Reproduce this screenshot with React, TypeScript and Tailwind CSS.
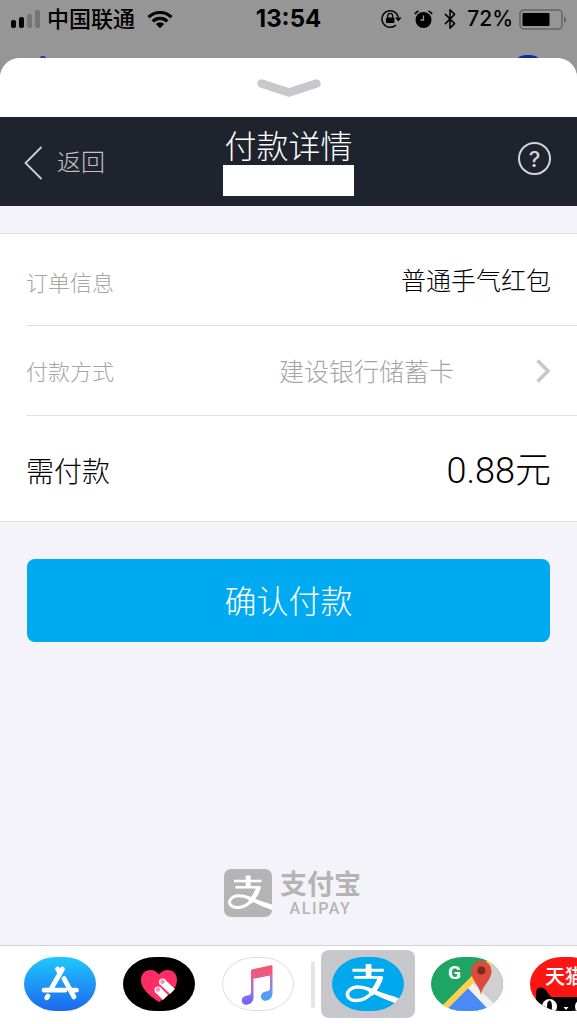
/**
 * Alipay payment sheet
 * Payment details shown over the conversation, with the app strip below
 */

import { useState } from "react";
import type { ReactNode } from "react";
import { Bluetooth } from "lucide-react";

const SignalIcon = () => (
  <svg width="31" height="18" viewBox="0 0 31 18" aria-hidden="true">
    <rect x="1" y="10" width="5" height="8" rx="2" />
    <rect x="9" y="7" width="5" height="11" rx="2" />
    <rect x="17" y="4" width="5" height="14" rx="2" fill="#747474" />
    <rect x="25" y="0" width="5" height="18" rx="2" fill="#747474" />
  </svg>
);

const WifiIcon = () => (
  <svg width="26" height="19" viewBox="0 0 26 19" aria-hidden="true">
    <g fill="none" stroke="#000" strokeWidth="3.2">
      <path d="M1.5 7.2a16.4 16.4 0 0 1 23 0" />
      <path d="M5.7 11.4a10.4 10.4 0 0 1 14.6 0" />
    </g>
    <path d="M13 18.2l-4.2-4.2a6 6 0 0 1 8.4 0z" />
  </svg>
);

const RotationLockIcon = () => (
  <svg width="21" height="20" viewBox="0 0 21 20" aria-hidden="true">
    <path
      d="M17.3 8A8.3 8.3 0 1 0 15 16"
      fill="none"
      stroke="#000"
      strokeWidth="1.4"
    />
    <path d="M14 8.500h6.600l-3.300 4z" />
    <rect x="5" y="8.500" width="8.400" height="5.600" rx="1" />
    <path
      d="M6.800 9V6.800a2.400 2.400 0 0 1 4.800 0V9"
      fill="none"
      stroke="#000"
      strokeWidth="1.3"
    />
  </svg>
);

const AlarmIcon = () => (
  <svg width="19" height="19" viewBox="0 0 19 19" aria-hidden="true">
    <circle cx="9.5" cy="10" r="8" fill="#000" />
    <path
      d="M1 4.200A6 6 0 0 1 4.500 1M18 4.200A6 6 0 0 0 14.500 1"
      fill="none"
      stroke="#000"
      strokeWidth="1.8"
    />
    <path d="M9.500 5.500v4.500H6.500" fill="none" stroke="#969696" strokeWidth="1.300" />
  </svg>
);

const BatteryIcon = () => (
  <svg width="48" height="21" viewBox="0 0 48 21" aria-hidden="true">
    <rect
      x="1"
      y="1"
      width="42"
      height="19"
      rx="4"
      fill="none"
      stroke="#666"
      strokeWidth="1.6"
    />
    <rect x="3.500" y="4" width="27" height="13" rx="1" />
    <path d="M45 7.500a3.600 3.600 0 0 1 0 6.600z" fill="#666" />
  </svg>
);

// Brand mark, drawn on a 48 unit square
const AlipayMark = () => (
  <g fill="none" stroke="#fff">
    <path d="M10 12h27.500M11.500 18.300h25" strokeWidth="2.600" />
    <path d="M24.200 6.500v12" strokeWidth="5" />
    <path
      d="M35 18C32 27 25 38.300 14 38.600C6.500 38.800 4 34 6.500 30.500C10 25.500 18 26 25 29L34 33"
      strokeWidth="3"
    />
    <path d="M34.800 18C33 23.500 30 29 26 33" strokeWidth="4.600" />
    <path
      d="M22 26.600C30 29.500 38 32.800 48 35.600V41C39 38 31 34 23 30Z"
      fill="#fff"
      stroke="none"
    />
  </g>
);

const AppStoreIcon = () => (
  <svg width="72" height="54" viewBox="0 0 72 54" aria-hidden="true">
    <defs>
      <linearGradient id="store" x1="0" y1="0" x2="0" y2="1">
        <stop offset="0" stopColor="#1fc8fb" />
        <stop offset="1" stopColor="#1d67f0" />
      </linearGradient>
    </defs>
    <rect width="72" height="54" fill="url(#store)" />
    <g stroke="#fff" strokeWidth="4.800" strokeLinecap="round">
      <path d="M38.500 12L27 32M33.500 12l2.500 4M40 21.500l10 18.500" />
      <path d="M20 33.200h21M48 33.200h4.500M24 39l-1.300 1.800" />
    </g>
  </svg>
);

const HeartIcon = () => (
  <svg width="72" height="54" viewBox="0 0 72 54" aria-hidden="true">
    <rect width="72" height="54" />
    <path
      d="M36 45C28 40 18 32.500 18 23c0-6 4-10 9-10 4 0 7 2 9 4.500C38 15 41 13 45 13c5 0 9 4 9 10 0 9.500-10 17-18 22z"
      fill="#ff2d66"
    />
    <g stroke="#fff" strokeWidth="7">
      <path d="M35 33l7.500 7.500M39.500 25l10 9.500" />
      <path d="M35 33h.1M39.500 25h.1" strokeLinecap="round" />
    </g>
    <g fill="#ff8fae">
      <circle cx="35" cy="32.500" r="2.200" />
      <circle cx="39.500" cy="24.800" r="2.200" />
    </g>
  </svg>
);

const MusicIcon = () => (
  <svg width="72" height="54" viewBox="0 0 72 54" aria-hidden="true">
    <defs>
      <linearGradient
        id="note"
        gradientUnits="userSpaceOnUse"
        x1="36"
        y1="8"
        x2="36"
        y2="46"
      >
        <stop offset="0" stopColor="#fb5468" />
        <stop offset="0.350" stopColor="#e0609a" />
        <stop offset="0.700" stopColor="#8a78ea" />
        <stop offset="1" stopColor="#7a5cff" />
      </linearGradient>
      <linearGradient
        id="note-right"
        gradientUnits="userSpaceOnUse"
        x1="36"
        y1="18"
        x2="36"
        y2="42"
      >
        <stop offset="0" stopColor="#d868a0" />
        <stop offset="0.500" stopColor="#7c8cf0" />
        <stop offset="1" stopColor="#3fa5ff" />
      </linearGradient>
    </defs>
    <path
      d="M28 13c0-1 .500-1.600 1.500-1.800L48 7.300c1-.200 1.500.200 1.500 1.200V17L30.500 20.800V39c0 4-2 6.600-5.500 7.600-3.500.800-6.300-1-6.300-4 0-2.800 2-4.600 5-5.200 2.500-.500 4.300-.800 4.300-3z"
      fill="url(#note)"
    />
    <path
      d="M47 16.500h2.500V35c0 4-2 6.600-5.500 7.500-3.500.800-6-1-6-4 0-2.800 2-4.500 4.700-5 2.500-.500 4.300-.800 4.300-3z"
      fill="url(#note-right)"
    />
  </svg>
);

const AlipayIcon = () => (
  <svg width="72" height="54" viewBox="0 0 72 54" aria-hidden="true">
    <rect width="72" height="54" fill="#00a9ee" />
    <g transform="translate(9 -0.500) scale(1.140)">
      <AlipayMark />
      <path d="M46 35L60 40V47L46 40.300z" fill="#fff" />
    </g>
  </svg>
);

const MapsIcon = () => (
  <svg width="72" height="54" viewBox="0 0 72 54" aria-hidden="true">
    <rect width="72" height="54" fill="#1fa563" />
    <path d="M12 54L62 4h10v50z" fill="#d0d0d0" />
    <path d="M14 54l23-23 22 23z" fill="#4a89f6" />
    <path d="M37 31l5-5 28 28H59z" fill="#f2f2f2" />
    <path d="M10 54L62 2" stroke="#fdd14c" strokeWidth="6" />
    <path
      d="M50 38c-1-9-10-15-10-24a10.300 10.300 0 0 1 20.600 0c0 9-9.600 15-10.600 24z"
      fill="#dd4b3e"
    />
    <circle cx="50.300" cy="13.500" r="4" fill="#7a2a23" />
    <text
      x="17"
      y="22"
      fontFamily="Roboto, sans-serif"
      fontSize="19"
      fontWeight="700"
      fill="#fff"
    >
      G
    </text>
  </svg>
);

const TmallIcon = () => (
  <svg width="72" height="54" viewBox="0 0 72 54" aria-hidden="true">
    <rect width="72" height="54" fill="#ff1414" />
    <path d="M6 54V35c1-6 8-6 12 1l3 4h30l3-4c4-7 11-7 12-1v19z" />
    <g fill="#fff">
      <circle cx="19.500" cy="49.500" r="7.500" />
      <circle cx="52.500" cy="49.500" r="7.500" />
      <path d="M33.500 50h5l-2.500 3z" />
    </g>
    <ellipse cx="19.500" cy="49.500" rx="2.500" ry="6" />
    <ellipse cx="52.500" cy="49.500" rx="2.500" ry="6" />
    <text
      x="15"
      y="27"
      fontFamily="'Noto Sans CJK SC', sans-serif"
      fontSize="20"
      fontWeight="500"
      fill="#fff"
    >
      天猫
    </text>
  </svg>
);

interface DockApp {
  id: string;
  name: string;
  icon: ReactNode;
}

const systemApps: DockApp[] = [
  { id: "store", name: "App Store", icon: <AppStoreIcon /> },
  { id: "touch", name: "Digital Touch", icon: <HeartIcon /> },
  { id: "music", name: "Music", icon: <MusicIcon /> },
];

const userApps: DockApp[] = [
  { id: "alipay", name: "Alipay", icon: <AlipayIcon /> },
  { id: "maps", name: "Google Maps", icon: <MapsIcon /> },
  { id: "tmall", name: "Tmall", icon: <TmallIcon /> },
];

interface DockButtonProps {
  app: DockApp;
  selected: boolean;
  onSelect: (id: string) => void;
}

function DockButton({ app, selected, onSelect }: DockButtonProps) {
  return (
    <button
      type="button"
      aria-label={app.name}
      aria-pressed={selected}
      onClick={() => onSelect(app.id)}
      className={`-mx-[11px] shrink-0 rounded-lg px-[11px] py-[7px] ${
        selected ? "bg-[#c8c7cc]" : ""
      }`}
    >
      <span
        className={`block h-[54px] w-[72px] overflow-hidden rounded-[32px/27px] ${
          app.id === "music" ? "border border-[#dedee0]" : ""
        }`}
      >
        {app.icon}
      </span>
    </button>
  );
}

export default function App() {
  const [activeApp, setActiveApp] = useState("alipay");

  return (
    <div className="flex min-h-screen flex-col overflow-hidden bg-[#969696] font-['Roboto','Noto_Sans_CJK_SC',sans-serif] text-black">
      {/* Status bar */}
      <header className="relative flex h-[58px] items-start px-2.5 pt-px font-['Inter','Noto_Sans_CJK_SC',sans-serif] text-[22px] leading-9 font-medium">
        <div className="flex h-9 flex-1 items-center">
          <SignalIcon />
          <span className="ml-1.5 mr-3">中国联通</span>
          <WifiIcon />
        </div>
        <span className="text-2xl leading-9 font-bold">13:54</span>
        <div className="flex h-9 flex-1 items-center justify-end gap-1.5">
          <RotationLockIcon />
          <span className="ml-1.5">
            <AlarmIcon />
          </span>
          <Bluetooth size={22} strokeWidth={1.7} />
          <span className="text-[21px]">72%</span>
          <BatteryIcon />
        </div>
        <span className="absolute bottom-0 left-10 h-0.5 w-1.5 rounded-t-full bg-[#24409a]" />
        <span className="absolute right-[39px] bottom-0 h-[3px] w-5 rounded-[50%_50%_0_0/100%_100%_0_0] bg-[#0a2aa0]" />
      </header>

      <main className="flex flex-1 flex-col overflow-hidden rounded-t-[20px] bg-[#f4f3f9]">
        {/* Drag handle */}
        <button
          type="button"
          aria-label="收起"
          className="flex h-[59px] items-center justify-center bg-white"
        >
          <svg width="66" height="20" viewBox="0 0 66 20" fill="none">
            <path
              d="M5.500 5.500L33 14.500L60.500 5.500"
              stroke="#c8c7cc"
              strokeWidth="8.500"
              strokeLinecap="round"
              strokeLinejoin="round"
            />
          </svg>
        </button>

        {/* Title bar */}
        <div className="flex h-[89px] items-center bg-[#1f232e] px-6">
          <div className="flex-1">
            <button
              type="button"
              className="flex items-center gap-3.5 pt-0.5 text-2xl font-light text-[#c4c4c4]"
            >
              <svg width="19" height="34" viewBox="0 0 19 34" fill="none">
                <path d="M17.500 1L1.500 17L17.500 33" stroke="#d0d0d0" strokeWidth="1.800" />
              </svg>
              返回
            </button>
          </div>
          <div className="flex flex-col items-center">
            <h1 className="pt-0.5 text-[32px] leading-9 font-light text-white">
              付款详情
            </h1>
            <div className="h-[31px] w-[131px] bg-white" />
          </div>
          <div className="flex flex-1 justify-end">
            <button
              type="button"
              aria-label="帮助"
              className="mr-0.5 mb-1.5 flex size-[33px] items-center justify-center rounded-full border-2 border-[#d4d4d4] font-['Inter',sans-serif] text-[22px] leading-none font-medium text-[#d4d4d4]"
            >
              ?
            </button>
          </div>
        </div>

        {/* Order details */}
        <dl className="mt-[27px] border-y border-[#e0e0e2] bg-white pl-[26px] font-light">
          <div className="flex h-[92px] items-center justify-between border-b border-[#e0e0e2] pt-1 pr-[26px]">
            <dt className="pt-1 text-[22px] text-[#a5a5a5]">订单信息</dt>
            <dd className="text-[25px]">普通手气红包</dd>
          </div>
          <div className="flex h-[90px] items-center border-b border-[#e0e0e2] pt-1 pr-[26px] text-[#a5a5a5]">
            <dt className="text-[22px]">付款方式</dt>
            <dd className="flex-1">
              <button
                type="button"
                className="flex w-full items-center justify-end text-[25px]"
              >
                建设银行储蓄卡
                <svg
                  width="15"
                  height="24"
                  viewBox="0 0 15 24"
                  fill="none"
                  className="mb-1 ml-[82px]"
                >
                  <path d="M1.500 1.500L12 12L1.500 22.500" stroke="#c7c7c7" strokeWidth="3.500" />
                </svg>
              </button>
            </dd>
          </div>
          <div className="flex h-[105px] items-center justify-between pt-1 pr-[26px]">
            <dt className="pt-1 text-[28px]">需付款</dt>
            <dd className="text-4xl">0.88元</dd>
          </div>
        </dl>

        <button
          type="button"
          className="mx-[27px] mt-[37px] h-[83px] rounded-lg bg-[#00aaf0] pt-0.5 text-[32px] font-light text-white"
        >
          确认付款
        </button>

        {/* Brand */}
        <div className="mt-auto mb-7 flex items-center gap-2 self-center pt-10 pl-2 text-[#b4b4b4]">
          <svg width="48" height="48" viewBox="0 0 48 48" aria-hidden="true">
            <rect width="48" height="48" rx="7" fill="#b4b4b4" />
            <AlipayMark />
          </svg>
          <div className="flex flex-col items-center">
            <span className="text-[27px] leading-8 font-bold">支付宝</span>
            <span className="text-base leading-4 font-medium tracking-widest">
              ALIPAY
            </span>
          </div>
        </div>
      </main>

      {/* App strip */}
      <nav className="flex h-[79px] items-center overflow-hidden border-t border-[#d2d2d4] bg-white pb-0.5 pl-6">
        <div className="flex shrink-0 gap-[27px]">
          {systemApps.map((app) => (
            <DockButton
              key={app.id}
              app={app}
              selected={activeApp === app.id}
              onSelect={setActiveApp}
            />
          ))}
        </div>
        <span className="mx-[17px] h-[47px] w-1 shrink-0 rounded-full bg-[#e5e4ec]" />
        <div className="flex shrink-0 gap-[27px]">
          {userApps.map((app) => (
            <DockButton
              key={app.id}
              app={app}
              selected={activeApp === app.id}
              onSelect={setActiveApp}
            />
          ))}
        </div>
      </nav>
    </div>
  );
}
